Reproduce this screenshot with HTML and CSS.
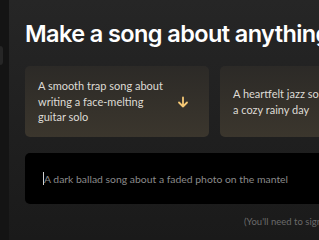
FILE: index.html
```html
<!DOCTYPE html>
<html lang="en">
<head>
    <meta charset="UTF-8">
    <title>Create</title>
    <link rel="stylesheet" href="styles.css">
</head>
<body>

<div class="page">
    <div class="sidebar">
        <div class="tab"></div>
    </div>

    <div class="main">
        <h1>Make a song about anything</h1>

        <div class="ideas">
            <div class="idea">
                <span>A smooth trap song about writing a face-melting guitar solo</span>
                <svg class="arrow" width="12" height="12" viewBox="0 0 12 12">
                    <path d="M6 1.5V10.5M2 6.5L6 10.5L10 6.5" fill="none" stroke="#f4c775" stroke-width="1.8" stroke-linecap="round" stroke-linejoin="round"/>
                </svg>
            </div>
            <div class="idea">
                <span>A heartfelt jazz song about a cozy rainy day</span>
                <svg class="arrow hidden" width="12" height="12" viewBox="0 0 12 12">
                    <path d="M6 1.5V10.5M2 6.5L6 10.5L10 6.5" fill="none" stroke="#f4c775" stroke-width="1.8" stroke-linecap="round" stroke-linejoin="round"/>
                </svg>
            </div>
        </div>

        <div class="prompt">
            <span class="cursor"></span>A dark ballad song about a faded photo on the mantel
        </div>

        <div class="note">(You'll need to sign in first)</div>
    </div>
</div>

</body>
</html>
```

FILE: styles.css
```css
body {
    margin: 0;
    background: #141414;
    font-family: Lato, "Noto Sans", sans-serif;
    overflow: hidden;
}

.page {
    display: flex;
    height: 240px;
}

.sidebar {
    width: 9px;
    flex-shrink: 0;
    background: #141414;
    padding-top: 46px;
}

.sidebar .tab {
    width: 3px;
    height: 19px;
    background: #262626;
    border-radius: 0 3px 3px 0;
}

.main {
    flex: 1;
    min-width: 0;
    background: linear-gradient(#262626, #1a1a1a);
    padding: 0 0 0 16px;
    overflow: hidden;
}

h1 {
    margin: 19px 0 0 0;
    font-family: Inter, sans-serif;
    font-size: 23.5px;
    font-weight: 600;
    line-height: 30px;
    color: #ffffff;
    white-space: nowrap;
    letter-spacing: -0.6px;
}

.ideas {
    display: flex;
    gap: 11px;
    margin-top: 17px;
}

.idea {
    flex-shrink: 0;
    width: 184px;
    height: 71px;
    box-sizing: border-box;
    padding: 0 20px 0 13px;
    display: flex;
    align-items: center;
    gap: 6px;
    border-radius: 5px;
    background: linear-gradient(#2c2a27, #3b362d);
    color: #dedbd5;
    font-size: 11px;
    line-height: 15.5px;
}

.idea span {
    flex: 1;
}

.arrow {
    flex-shrink: 0;
}

.arrow.hidden {
    visibility: hidden;
}

.prompt {
    width: 340px;
    height: 51px;
    margin-top: 16px;
    box-sizing: border-box;
    padding-left: 18px;
    display: flex;
    align-items: center;
    background: #000000;
    border-radius: 5px;
    color: #8a8a8a;
    font-size: 10.4px;
    white-space: nowrap;
}

.cursor {
    width: 1px;
    height: 13px;
    background: #cfcfcf;
}

.note {
    margin: 12px 0 0 219px;
    font-size: 9.5px;
    color: #6a6a6a;
    white-space: nowrap;
}
```
